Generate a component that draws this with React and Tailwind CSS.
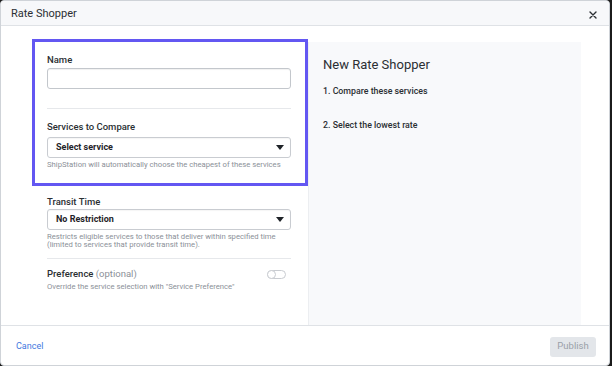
import { useState } from 'react';

const Caret = () => (
  <svg width="8" height="5" viewBox="0 0 8 5" className="shrink-0">
    <path d="M0 0h8L4 5z" fill="#1f2328" />
  </svg>
);

const Select = ({ value }) => (
  <div className="flex h-[21px] w-[244px] items-center justify-between rounded-[3px] border border-[#c9ccd1] bg-white pl-[8px] pr-[6px] shadow-[inset_0_1px_1px_rgba(0,0,0,0.04)]">
    <span className="pt-px text-[9px] font-bold text-[#1f2328]">{value}</span>
    <Caret />
  </div>
);

const App = () => {
  const [pref, setPref] = useState(false);

  return (
    <div className="h-[366px] w-[612px] bg-[#1b1b1b]" style={{ fontFamily: 'Roboto, "Liberation Sans", sans-serif' }}>
      <div className="flex h-full w-[610px] flex-col overflow-hidden rounded-[4px] border border-[#cfd3d8] bg-white">
        {/* header */}
        <div className="flex h-[25px] shrink-0 items-center justify-between border-b border-[#dfe2e6] bg-[#f7f8fa] pl-[10px] pr-[12px] pt-[3px]">
          <span className="text-[11px] text-[#2b2f33]">Rate Shopper</span>
          <svg width="8" height="8" viewBox="0 0 8 8">
            <path d="M1 1l6 6M7 1L1 7" stroke="#2b2f33" strokeWidth="1.4" strokeLinecap="round" />
          </svg>
        </div>

        {/* body */}
        <div className="flex flex-1 pl-[31px] pt-[13px]">
          <div className="w-[276px] shrink-0">
            <div className="border-[3px] border-[#6357f2] pb-[13px] pl-[12px] pt-[11px]">
              <div className="text-[9.5px] font-medium leading-[14px] text-[#2b2f33]">Name</div>
              <input className="mt-[1px] block h-[21px] w-[244px] rounded-[3px] border border-[#c3c7cc] bg-white shadow-[inset_0_1px_1px_rgba(0,0,0,0.06)] outline-none" />
              <div className="mt-[19px] h-px w-[244px] bg-[#e6e8eb]" />
              <div className="mt-[11px] text-[9.5px] font-medium leading-[14px] text-[#2b2f33]">Services to Compare</div>
              <div className="mt-[3px]">
                <Select value="Select service" />
              </div>
              <div className="mt-[1px] text-[7.7px] leading-[11px] text-[#8b9098]">
                ShipStation will automatically choose the cheapest of these services
              </div>
            </div>

            <div className="pl-[15px] pt-[9px]">
              <div className="text-[9.5px] font-medium leading-[14px] text-[#2b2f33]">Transit Time</div>
              <Select value="No Restriction" />
              <div className="mt-[3px] text-[7.7px] leading-[8px] text-[#8b9098]">
                Restricts eligible services to those that deliver within specified time
                <br />
                (limited to services that provide transit time).
              </div>
              <div className="mt-[9px] h-px w-[244px] bg-[#e6e8eb]" />
              <div className="mt-[8px] flex w-[244px] items-start justify-between">
                <div>
                  <div className="text-[9.5px] leading-[14px] text-[#2b2f33]">
                    <span className="font-medium">Preference</span>{' '}
                    <span className="text-[#8b9098]">(optional)</span>
                  </div>
                  <div className="text-[7.7px] leading-[12px] text-[#8b9098]">
                    Override the service selection with "Service Preference"
                  </div>
                </div>
                <button
                  onClick={() => setPref(!pref)}
                  className="mr-[5px] mt-[3px] flex h-[9px] w-[19px] items-center rounded-full border border-[#c9ccd1] bg-white"
                >
                  <span className={`h-[9px] w-[9px] rounded-full border border-[#c9ccd1] bg-white ${pref ? 'ml-auto' : '-ml-px'}`} />
                </button>
              </div>
            </div>
          </div>

          <div className="mt-[3px] w-[273px] border-l border-[#eceef1] bg-[#f8f9fb] pl-[14px] pt-[14px]">
            <div className="text-[13px] leading-[18px] text-[#2b2f33]">New Rate Shopper</div>
            <div className="mt-[11px] text-[8.8px] font-medium text-[#2b2f33]">1. Compare these services</div>
            <div className="mt-[21px] text-[8.8px] font-medium text-[#2b2f33]">2. Select the lowest rate</div>
          </div>
        </div>

        {/* footer */}
        <div className="flex h-[40px] shrink-0 items-center justify-between border-t border-[#dfe2e6] pl-[15px] pr-[13px] pt-[2px]">
          <span className="text-[9px] text-[#3f78e0]">Cancel</span>
          <button className="h-[20px] w-[46px] rounded-[3px] bg-[#e3e6ea] text-[9.5px] text-[#9aa0a8]">Publish</button>
        </div>
      </div>
    </div>
  );
};

export default App;
